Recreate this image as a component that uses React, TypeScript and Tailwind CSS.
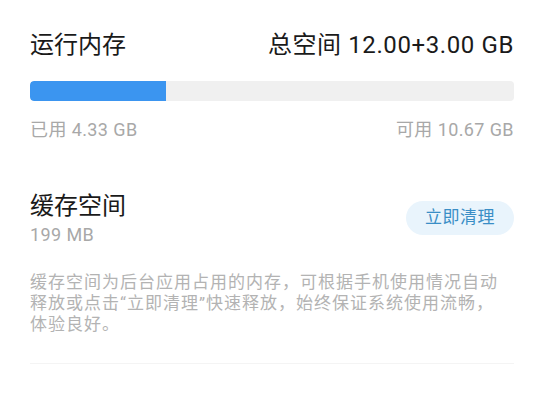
import React from "react";

const font = { fontFamily: 'Roboto, "Noto Sans CJK SC", sans-serif' };

export default function App() {
  const pct = 28;

  return (
    <div className="w-[544px] h-[400px] bg-white px-[30px] flex flex-col" style={font}>
      <div className="mt-[30px] h-[30px] flex items-center justify-between text-[#1a1a1a]">
        <span className="text-[24px] leading-[30px]">运行内存</span>
        <span className="text-[24px] leading-[30px] tracking-[0.6px]">总空间 12.00+3.00 GB</span>
      </div>

      <div className="mt-[21px] h-[20px] w-full rounded-[4px] bg-[#f0f0f0] overflow-hidden">
        <div className="h-full bg-[#3b95f0] rounded-l-[4px]" style={{ width: `${pct}%` }} />
      </div>

      <div className="mt-[19px] h-[20px] flex items-center justify-between text-[18px] leading-[20px] tracking-[0.4px] text-[#a8a8a8]">
        <span>已用 4.33 GB</span>
        <span>可用 10.67 GB</span>
      </div>

      <div className="mt-[51px] flex items-center justify-between">
        <div className="flex flex-col">
          <span className="text-[24px] leading-[30px] text-[#1a1a1a]">缓存空间</span>
          <span className="mt-[4px] text-[18px] leading-[20px] tracking-[0.4px] text-[#a8a8a8]">199 MB</span>
        </div>
        <button className="w-[108px] h-[34px] rounded-full bg-[#e9f4fc] text-[17px] tracking-[0.5px] text-[#3a8ec6]">
          立即清理
        </button>
      </div>

      <p className="mt-[27px] text-[17px] leading-[21px] tracking-[1px] text-[#b3b3b3]">
        缓存空间为后台应用占用的内存，可根据手机使用情况自动
        <br />
        释放或点击“立即清理”快速释放，始终保证系统使用流畅，
        <br />
        体验良好。
      </p>

      <div className="mt-[28px] h-px w-full bg-[#f4f4f4]" />
    </div>
  );
}
